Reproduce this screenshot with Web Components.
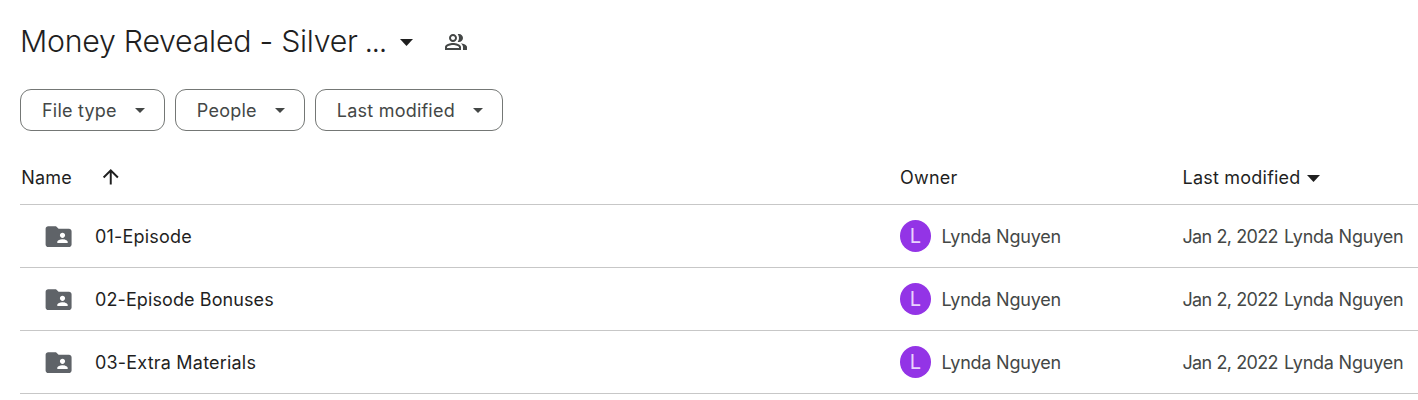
<!DOCTYPE html>
<html lang="en">
<head>
<meta charset="utf-8">
<title>Money Revealed - Silver</title>
<style>
    body { margin: 0; background: #fff; font-family: Inter, "Open Sans", sans-serif; overflow: hidden; }
</style>
</head>
<body>
<drive-page>
    <drive-title slot="title">Money Revealed - Silver <span style="letter-spacing: -1.4px; margin-left: -1.5px">...</span></drive-title>
    <filter-chip slot="filters">File type</filter-chip>
    <filter-chip slot="filters">People</filter-chip>
    <filter-chip slot="filters">Last modified</filter-chip>
    <file-header></file-header>
    <file-row owner="Lynda Nguyen" modified="Jan 2, 2022">01-Episode</file-row>
    <file-row owner="Lynda Nguyen" modified="Jan 2, 2022" style="--name-spacing: .1px">02-Episode Bonuses</file-row>
    <file-row owner="Lynda Nguyen" modified="Jan 2, 2022">03-Extra Materials</file-row>
</drive-page>

<script>
class DrivePage extends HTMLElement {
    #shadow = this.attachShadow({ mode: 'open' });

    constructor() {
        super();
        this.#shadow.innerHTML = `
            <style>
                :host{ display: flex; flex-direction: column; padding: 18px 0 0 20px; }
                nav{ display: flex; gap: 10.2px; margin: 25px 0 19px; }
            </style>
            <slot name="title"></slot>
            <nav><slot name="filters"></slot></nav>
            <main><slot></slot></main>
        `;
    }
}

customElements.define('drive-page', DrivePage);


class DropCaret extends HTMLElement {
    #shadow = this.attachShadow({ mode: 'open' });

    constructor() {
        super();
        this.#shadow.innerHTML = `
            <style>
                :host{ display: block; width: 13px; height: 7px; flex: none; }
                svg{ display: block; width: 100%; height: 100%; fill: currentColor; }
            </style>
            <svg viewBox="0 0 10 5" preserveAspectRatio="none"><path d="M0 0l5 5 5-5z"/></svg>
        `;
    }
}

customElements.define('drop-caret', DropCaret);


class DriveTitle extends HTMLElement {
    #shadow = this.attachShadow({ mode: 'open' });

    constructor() {
        super();
        this.#shadow.innerHTML = `
            <style>
                :host{ display: flex; align-items: center; height: 46px; color: #1f1f1f; }
                h1{ margin: 0; width: 379.5px; font-size: 30.3px; font-weight: 365; letter-spacing: -.26px; line-height: 46px; white-space: nowrap; }
                drop-caret{ margin-top: 2px; }
                svg{ width: 24px; height: 24px; margin: 2px 0 0 31.5px; fill: #444746; }
            </style>
            <h1><slot></slot></h1>
            <drop-caret></drop-caret>
            <svg viewBox="0 0 24 24"><path fill-rule="evenodd" d="M15 8c0-1.42-.5-2.73-1.33-3.76.42-.14.86-.24 1.33-.24 2.21 0 4 1.79 4 4s-1.79 4-4 4c-.43 0-.84-.09-1.23-.21-.03-.01-.06-.02-.1-.03A5.98 5.98 0 0 0 15 8zm1.66 5.13C18.03 14.06 19 15.32 19 17v3h4v-3c0-2.18-3.58-3.47-6.34-3.87zM9 6c-1.1 0-2 .9-2 2s.9 2 2 2 2-.9 2-2-.9-2-2-2m0 6c-2.21 0-4-1.79-4-4s1.79-4 4-4 4 1.79 4 4-1.79 4-4 4m0 3c-2.7 0-5.8 1.29-6 2.01V18h12v-1c-.2-.71-3.3-2-6-2m0-2c2.67 0 8 1.34 8 4v3H1v-3c0-2.66 5.33-4 8-4z"/></svg>
        `;
    }
}

customElements.define('drive-title', DriveTitle);


class FilterChip extends HTMLElement {
    #shadow = this.attachShadow({ mode: 'open' });

    constructor() {
        super();
        this.#shadow.innerHTML = `
            <style>
                :host{ display: flex; align-items: center; justify-content: space-between; box-sizing: border-box; height: 42px; padding: 0 18.8px 0 21px; gap: 18.1px; border: 1px solid #747775; border-radius: 11px; color: #444746; }
                span{ font-size: 18px; letter-spacing: .22px; white-space: nowrap; }
                drop-caret{ width: 10px; height: 5px; }
            </style>
            <span><slot></slot></span>
            <drop-caret></drop-caret>
        `;
    }
}

customElements.define('filter-chip', FilterChip);


class FileHeader extends HTMLElement {
    #shadow = this.attachShadow({ mode: 'open' });

    constructor() {
        super();
        this.#shadow.innerHTML = `
            <style>
                :host{ display: grid; grid-template-columns: 880px 282.5px 1fr; align-items: center; box-sizing: border-box; height: 55px; border-bottom: 1px solid #c7c7c7; color: #1f1f1f; font-size: 18px; letter-spacing: .22px; }
                div{ display: flex; align-items: center; white-space: nowrap; }
                .name{ padding-left: 1.2px; }
                svg{ width: 23.5px; height: 23.5px; margin-left: 26.6px; fill: currentColor; }
                drop-caret{ margin: 2px 0 0 6.5px; }
            </style>
            <div class="name">Name <svg viewBox="0 0 24 24"><path d="M4 12l1.41 1.41L11 7.83V20h2V7.83l5.58 5.59L20 12l-8-8-8 8z"/></svg></div>
            <div>Owner</div>
            <div>Last modified <drop-caret></drop-caret></div>
        `;
    }
}

customElements.define('file-header', FileHeader);


class FileRow extends HTMLElement {
    #shadow = this.attachShadow({ mode: 'open' });

    constructor() {
        super();
        this.#shadow.innerHTML = `
            <style>
                :host{ display: grid; grid-template-columns: 880px 282.5px 1fr; align-items: center; box-sizing: border-box; height: 63px; border-bottom: 1px solid #c7c7c7; color: #444746; font-size: 18px; }
                div{ display: flex; align-items: center; white-space: nowrap; font-weight: 375; }
                .name{ color: #1f1f1f; font-weight: 400; letter-spacing: var(--name-spacing, .2px); }
                svg{ width: 31.2px; height: 31.2px; margin: 1px 21.3px 0 22.5px; fill: #5f6368; }
                .avatar{ display: grid; place-items: center; width: 31px; height: 32px; margin-right: 10.5px; border-radius: 50%; background: #9334e6; color: #e9d2fd; font-size: 20px; font-weight: 400; }
                .person{ letter-spacing: -.22px; }
                .date{ width: 101.5px; letter-spacing: -.65px; word-spacing: .5px; }
            </style>
            <div class="name">
                <svg viewBox="0 0 24 24"><path d="M20 6h-8l-2-2H4c-1.1 0-1.99.9-1.99 2L2 18c0 1.1.9 2 2 2h16c1.1 0 2-.9 2-2V8c0-1.1-.9-2-2-2zm-5 3c1.1 0 2 .9 2 2s-.9 2-2 2-2-.9-2-2 .9-2 2-2zm4 8h-8v-1c0-1.33 2.67-2 4-2s4 .67 4 2v1z"/></svg>
                <slot></slot>
            </div>
            <div><span class="avatar"></span><span class="person"></span></div>
            <div><span class="date"></span><span class="person"></span></div>
        `;
    }

    connectedCallback() {
        const owner = this.getAttribute('owner');
        this.#shadow.querySelector('.avatar').textContent = owner[0];
        this.#shadow.querySelectorAll('.person').forEach(el => el.textContent = owner);
        this.#shadow.querySelector('.date').textContent = this.getAttribute('modified');
    }
}

customElements.define('file-row', FileRow);
</script>
</body>
</html>
